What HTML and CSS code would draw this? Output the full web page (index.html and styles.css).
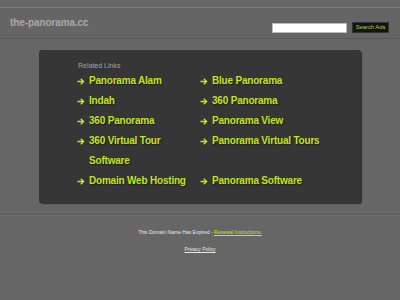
FILE: index.html
```html
<!DOCTYPE html>
<html>
<head>
<meta charset="utf-8">
<link rel="stylesheet" href="styles.css">
</head>
<body>
<div class="topbar"></div>
<header class="header">
  <div class="title">the-panorama.cc</div>
  <form class="search">
    <input class="search-input" type="text">
    <button class="search-btn" type="button">Search Ads</button>
  </form>
</header>
<main class="main">
  <section class="panel">
    <div class="panel-title">Related Links</div>
    <ul class="links">
      <li><svg class="arrow" viewBox="0 0 8 7"><path d="M0.5 3.5H6.5M3.8 0.8L6.6 3.5L3.8 6.2"/></svg><a href="#">Panorama Alam</a></li>
      <li><svg class="arrow" viewBox="0 0 8 7"><path d="M0.5 3.5H6.5M3.8 0.8L6.6 3.5L3.8 6.2"/></svg><a href="#">Blue Panorama</a></li>
      <li><svg class="arrow" viewBox="0 0 8 7"><path d="M0.5 3.5H6.5M3.8 0.8L6.6 3.5L3.8 6.2"/></svg><a href="#">Indah</a></li>
      <li><svg class="arrow" viewBox="0 0 8 7"><path d="M0.5 3.5H6.5M3.8 0.8L6.6 3.5L3.8 6.2"/></svg><a href="#">360 Panorama</a></li>
      <li><svg class="arrow" viewBox="0 0 8 7"><path d="M0.5 3.5H6.5M3.8 0.8L6.6 3.5L3.8 6.2"/></svg><a href="#">360 Panorama</a></li>
      <li><svg class="arrow" viewBox="0 0 8 7"><path d="M0.5 3.5H6.5M3.8 0.8L6.6 3.5L3.8 6.2"/></svg><a href="#">Panorama View</a></li>
      <li><svg class="arrow" viewBox="0 0 8 7"><path d="M0.5 3.5H6.5M3.8 0.8L6.6 3.5L3.8 6.2"/></svg><a href="#">360 Virtual Tour Software</a></li>
      <li><svg class="arrow" viewBox="0 0 8 7"><path d="M0.5 3.5H6.5M3.8 0.8L6.6 3.5L3.8 6.2"/></svg><a href="#">Panorama Virtual Tours</a></li>
      <li><svg class="arrow" viewBox="0 0 8 7"><path d="M0.5 3.5H6.5M3.8 0.8L6.6 3.5L3.8 6.2"/></svg><a href="#">Domain Web Hosting</a></li>
      <li><svg class="arrow" viewBox="0 0 8 7"><path d="M0.5 3.5H6.5M3.8 0.8L6.6 3.5L3.8 6.2"/></svg><a href="#">Panorama Software</a></li>
    </ul>
  </section>
</main>
<footer class="footer">
  <p class="expired">This Domain Name Has Expired - <a href="#" class="renew">Renewal Instructions.</a></p>
  <p class="privacy"><a href="#">Privacy Policy</a></p>
</footer>
</body>
</html>
```
FILE: styles.css
```css
html, body {
  margin: 0;
  padding: 0;
}
body {
  background: #666666;
  font-family: "Liberation Sans", Arial, sans-serif;
  width: 400px;
  height: 300px;
  overflow: hidden;
}
.topbar {
  height: 7px;
  background: #676767;
}
.header {
  height: 30px;
  border-top: 1px solid #7b7b7b;
  border-bottom: 1px solid #585858;
  background: #656565;
  display: flex;
  justify-content: space-between;
  align-items: flex-start;
  padding: 0 11px 0 10px;
}
.title {
  margin-top: 9px;
  font-size: 10px;
  letter-spacing: -0.1px;
  line-height: 12px;
  font-weight: bold;
  color: #a9a9a9;
}
.search {
  margin: 14px 0 0 0;
  display: flex;
  gap: 5px;
  align-items: center;
}
.search-input {
  box-sizing: border-box;
  width: 75px;
  height: 10px;
  margin: 0;
  padding: 0;
  border: 1px solid #bbbbbb;
  background: #ffffff;
}
.search-btn {
  box-sizing: border-box;
  width: 37px;
  height: 11px;
  margin: 0;
  padding: 0;
  border: 1px solid #333333;
  background: #141414;
  color: #a8d24a;
  font-family: "Liberation Sans", Arial, sans-serif;
  font-size: 5.8px;
  line-height: 9px;
}
.main {
  padding-top: 11px;
  display: flex;
  justify-content: center;
}
.panel {
  box-sizing: border-box;
  width: 322px;
  height: 153px;
  background: #363636;
  border-radius: 3px;
  box-shadow: 1px 1px 1px #2e2e2e;
  padding: 11px 0 0 38px;
}
.panel-title {
  font-size: 7px;
  line-height: 9px;
  color: #a4a4a4;
  padding-left: 1px;
}
.links {
  list-style: none;
  margin: 1px 0 0 0;
  padding: 0;
  display: grid;
  grid-template-columns: 123px 1fr;
}
.links li {
  display: flex;
  align-items: flex-start;
  font-size: 10px;
  letter-spacing: -0.2px;
  line-height: 20px;
  font-weight: bold;
  color: #c4e41c;
  text-shadow: 1px 1px 1px #1e1e1e;
}
.arrow {
  flex: none;
  width: 8px;
  height: 7px;
  margin: 7px 4px 0 0;
  fill: none;
  stroke: #c4e41c;
  stroke-width: 1.4;
}
.links a {
  color: #c4e41c;
  text-decoration: none;
}
.footer {
  margin-top: 11px;
  border-top: 1px solid #5c5c5c;
  box-shadow: 0 1px 0 #6e6e6e inset;
  text-align: center;
  padding-top: 14px;
}
.expired {
  margin: 0;
  font-size: 5px;
  line-height: 6px;
  color: #e8e8e8;
}
.renew {
  color: #c4e41c;
}
.privacy {
  margin: 11px 0 0 0;
  font-size: 5px;
  line-height: 6px;
}
.privacy a {
  color: #e8e8e8;
}
```
